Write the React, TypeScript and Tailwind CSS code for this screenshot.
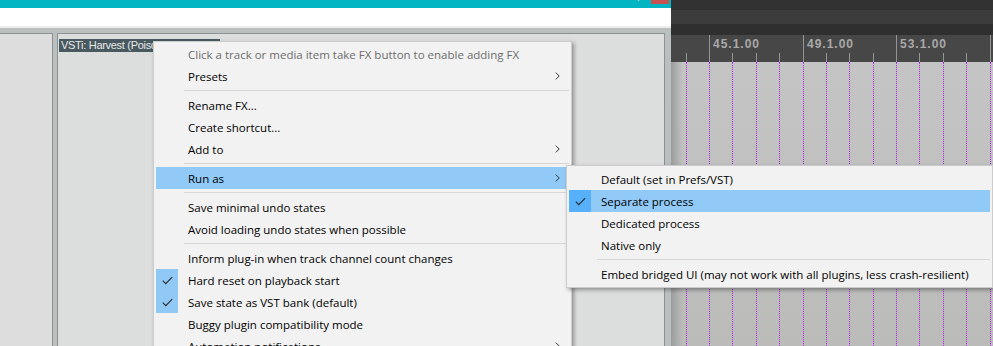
const BEAT = 23.375;
const ticks = Array.from({ length: 14 }, (_, i) => ({
  x: Math.round(38 + BEAT * (i - 1)),
  major: (i - 1) % 4 === 0,
}));
const labels = [
  { x: 38, text: "45.1.00" },
  { x: 132, text: "49.1.00" },
  { x: 225, text: "53.1.00" },
];

type Row =
  | { sep: true }
  | { label: string; sub?: boolean; checked?: boolean; active?: boolean; disabled?: boolean; sep?: false };

const mainItems: Row[] = [
  { label: "Click a track or media item take FX button to enable adding FX", disabled: true },
  { label: "Presets", sub: true },
  { sep: true },
  { label: "Rename FX..." },
  { label: "Create shortcut..." },
  { label: "Add to", sub: true },
  { sep: true },
  { label: "Run as", sub: true, active: true },
  { sep: true },
  { label: "Save minimal undo states" },
  { label: "Avoid loading undo states when possible" },
  { sep: true },
  { label: "Inform plug-in when track channel count changes" },
  { label: "Hard reset on playback start", checked: true },
  { label: "Save state as VST bank (default)", checked: true },
  { label: "Buggy plugin compatibility mode" },
  { label: "Automation notifications", sub: true },
];

const runAsItems: Row[] = [
  { label: "Default (set in Prefs/VST)" },
  { label: "Separate process", checked: true, active: true },
  { label: "Dedicated process" },
  { label: "Native only" },
  { sep: true },
  { label: "Embed bridged UI (may not work with all plugins, less crash-resilient)" },
];

function Check() {
  return (
    <svg width="11" height="9" viewBox="0 0 11 9" fill="none">
      <polyline points="0.8,4.6 3.8,7.6 10.2,1.2" stroke="#2b2b2b" strokeWidth="1.1" />
    </svg>
  );
}

function Chevron() {
  return (
    <svg width="5" height="8" viewBox="0 0 5 8" fill="none">
      <polyline points="0.8,0.6 4.2,4 0.8,7.4" stroke="#333" strokeWidth="1" />
    </svg>
  );
}

function MenuRows({ rows }: { rows: Row[] }) {
  return (
    <>
      {rows.map((r, i) =>
        r.sep ? (
          <div key={i} className="h-[7px] pl-[28px] flex items-center">
            <div className="h-px w-full bg-[#d7d7d7]" />
          </div>
        ) : (
          <div
            key={i}
            className={`relative flex items-center h-[22px] pl-[32px] pr-[9px] ${r.active ? "bg-[#91c9f7]" : ""}`}
          >
            {r.checked && (
              <div
                className={`absolute left-0 top-0 h-[22px] w-[22px] flex items-center justify-center ${
                  r.active ? "bg-[#56b0fa]" : "bg-[#90c8f6]"
                }`}
              >
                <Check />
              </div>
            )}
            <span
              className={`flex-1 whitespace-nowrap pt-px ${r.disabled ? "text-[#6d6d6d]" : "text-black"}`}
            >
              {r.label}
            </span>
            {r.sub && <Chevron />}
          </div>
        )
      )}
    </>
  );
}

export default function App() {
  return (
    <div className="relative w-[993px] h-[346px] overflow-hidden flex font-['Open_Sans',sans-serif]">
      {/* left: fx window */}
      <div className="w-[671px] flex flex-col">
        <div className="h-[8px] bg-[#03b5c3] flex justify-end items-start pr-[2px]">
          <div className="w-px h-px bg-white mr-[12px]" />
          <div className="w-[18px] h-[4px] bg-[#c75050]" />
        </div>
        <div className="h-[18px] bg-white" />
        <div className="h-[2px] bg-[#ededed]" />
        <div className="h-[5px] bg-[#babfbf]" />
        <div className="flex-1 flex bg-[#babfbf]">
          <div className="w-[53px] bg-[#dcdddc] border-t border-r border-[#8c9192]" />
          <div className="ml-[4px] w-[608px] bg-[#dcdddd] border border-b-0 border-[#8c9192] pl-[1px]">
            <div className="inline-block h-[13px] w-[161px] bg-[#485a60] text-[#e8e8e8] text-[11px] leading-[13px] tracking-[-0.3px] pl-[2px] whitespace-nowrap overflow-hidden font-['Liberation_Sans',sans-serif]">
              VSTi: Harvest (Poisoned*Stranger)
            </div>
          </div>
        </div>
      </div>

      {/* right: arrange view */}
      <div className="w-[322px] flex flex-col">
        <div className="h-[10px] bg-[#323232]" />
        <div className="h-[14px] bg-[#3c3c3c]" />
        <div className="h-[11px] bg-[#2f2f2f]" />
        <div className="relative h-[27px] bg-[#474747]">
          {ticks.map((t) => (
            <div
              key={t.x}
              className={`absolute w-px bg-[#959595] ${t.major ? "top-0 bottom-0" : "top-[18px] bottom-0"}`}
              style={{ left: t.x }}
            />
          ))}
          {labels.map((l) => (
            <div
              key={l.text}
              className="absolute top-[2px] text-[12px] leading-[14px] font-bold tracking-[1px] text-[#a9a9a9] font-['Liberation_Sans',sans-serif]"
              style={{ left: l.x + 4 }}
            >
              {l.text}
            </div>
          ))}
        </div>
        <div className="relative flex-1 bg-gradient-to-b from-[#c4c4c4] to-[#bbbcba]">
          <div className="absolute inset-y-0 left-0 w-[12px] bg-gradient-to-r from-[#9b9d9d] to-transparent" />
          {ticks.map((t) => (
            <div
              key={t.x}
              className="absolute top-0 bottom-0 border-l border-dotted border-[#b31ff0]"
              style={{ left: t.x }}
            />
          ))}
        </div>
      </div>

      {/* context menu */}
      <div className="absolute left-[153px] top-[41px] w-[419px] bg-[#f2f2f2] border border-[#cccccc] p-[2px] pt-[1px] text-[11.5px] shadow-[2px_2px_4px_rgba(0,0,0,0.35)]">
        <MenuRows rows={mainItems} />
      </div>

      {/* run as submenu */}
      <div className="absolute left-[566px] top-[165px] w-[427px] bg-[#f2f2f2] border border-[#cccccc] p-[2px] text-[11.5px] shadow-[2px_2px_4px_rgba(0,0,0,0.35)]">
        <MenuRows rows={runAsItems} />
      </div>
    </div>
  );
}
